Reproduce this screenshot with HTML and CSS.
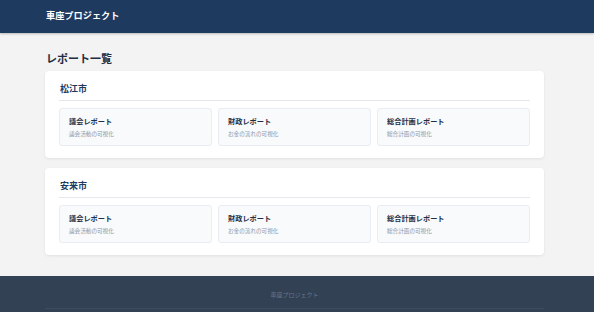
FILE: index.html
```html
<!DOCTYPE html>
<html lang="ja">
<head>
    <meta charset="UTF-8">
    <meta name="viewport" content="width=device-width, initial-scale=1.0">
    <title>車座プロジェクト</title>
    <link rel="stylesheet" href="styles.css">
</head>
<body>
    <header class="header">
        <div class="container">
            <div class="brand">車座プロジェクト</div>
        </div>
    </header>

    <main class="main">
        <div class="container">
            <h2 class="page-title">レポート一覧</h2>

            <section class="city">
                <h3 class="city-name">松江市</h3>
                <div class="reports">
                    <a class="report" href="#">
                        <div class="report-title">議会レポート</div>
                        <div class="report-desc">議会活動の可視化</div>
                    </a>
                    <a class="report" href="#">
                        <div class="report-title">財政レポート</div>
                        <div class="report-desc">お金の流れの可視化</div>
                    </a>
                    <a class="report" href="#">
                        <div class="report-title">総合計画レポート</div>
                        <div class="report-desc">総合計画の可視化</div>
                    </a>
                </div>
            </section>

            <section class="city">
                <h3 class="city-name">安来市</h3>
                <div class="reports">
                    <a class="report" href="#">
                        <div class="report-title">議会レポート</div>
                        <div class="report-desc">議会活動の可視化</div>
                    </a>
                    <a class="report" href="#">
                        <div class="report-title">財政レポート</div>
                        <div class="report-desc">お金の流れの可視化</div>
                    </a>
                    <a class="report" href="#">
                        <div class="report-title">総合計画レポート</div>
                        <div class="report-desc">総合計画の可視化</div>
                    </a>
                </div>
            </section>
        </div>
    </main>

    <footer class="footer">
        <div class="container">
            <div class="footer-name">車座プロジェクト</div>
            <div class="footer-bottom"></div>
        </div>
    </footer>
</body>
</html>
```

FILE: styles.css
```css
body {
    margin: 0;
    background-color: #f3f3f4;
    font-family: "Noto Sans CJK JP", "Noto Sans", sans-serif;
    color: #1e293b;
}
.container {
    width: 499px;
    margin-left: 45px;
}
.header {
    background-color: #1f3a5f;
    height: 33px;
    box-shadow: 0 1px 2px rgba(0, 0, 0, 0.25);
}
.brand {
    padding-left: 1px;
    line-height: 31px;
    font-size: 9.2px;
    font-weight: bold;
    color: #ffffff;
}
.main {
    padding: 17px 0 21px;
}
.page-title {
    margin: 0 0 5px 1px;
    font-size: 11px;
    line-height: 16px;
    font-weight: bold;
    color: #1f2d42;
}
.city {
    background-color: #ffffff;
    border-radius: 4px;
    box-shadow: 0 1px 3px rgba(0, 0, 0, 0.08);
    padding: 12px 14px 12px 14px;
}
.city + .city {
    margin-top: 10px;
}
.city-name {
    margin: 0;
    padding: 0 0 5px 1px;
    font-size: 9px;
    line-height: 12px;
    font-weight: bold;
    color: #1f3a5f;
    border-bottom: 1px solid #e5e7eb;
}
.reports {
    display: grid;
    grid-template-columns: repeat(3, 1fr);
    gap: 6px;
    margin-top: 7px;
}
.report {
    display: block;
    height: 38px;
    box-sizing: border-box;
    padding: 7px 9px;
    background-color: #f8fafc;
    border: 1px solid #e8edf3;
    border-radius: 3px;
    text-decoration: none;
}
.report-title {
    font-size: 7.2px;
    line-height: 10px;
    font-weight: bold;
    color: #1e2f48;
}
.report-desc {
    margin-top: 4px;
    font-size: 5.6px;
    line-height: 8px;
    color: #8a94a3;
}
.footer {
    background-color: #334155;
    padding-top: 14px;
    height: 24px;
}
.footer-name {
    text-align: center;
    font-size: 6px;
    line-height: 10px;
    color: #66748a;
}
.footer-bottom {
    margin-top: 8px;
    border-top: 1px solid #3e4c61;
}
```
